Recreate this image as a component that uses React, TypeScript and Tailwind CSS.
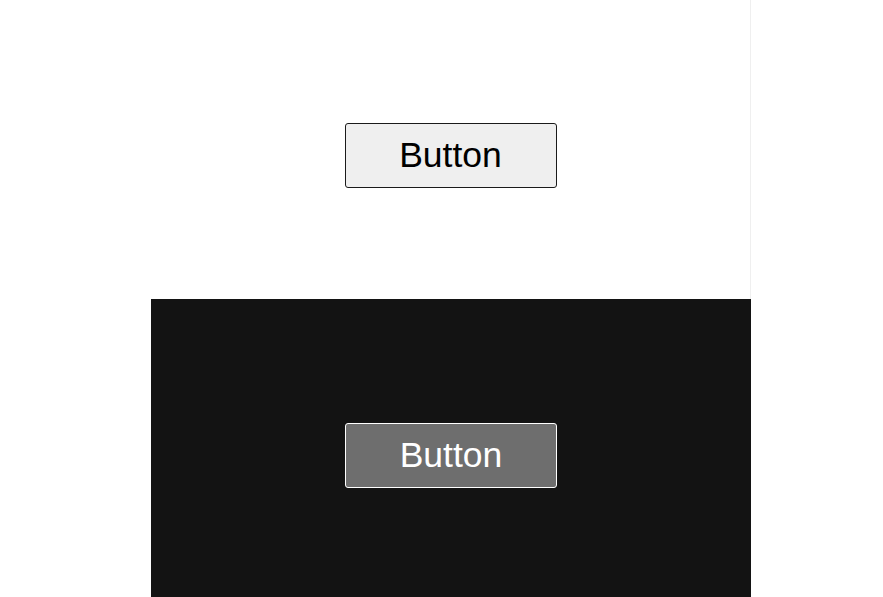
export default function App() {
  return (
    <div className="w-[883px] h-[597px] bg-white flex" style={{ fontFamily: '"Liberation Sans", Arial, sans-serif' }}>
      <div className="w-[151px] shrink-0" />
      <div className="w-[600px] flex flex-col">
        {/* light panel */}
        <div className="h-[299px] bg-white border-r border-[#efefef] flex justify-center">
          <button className="mt-[123px] w-[212px] h-[65px] bg-[#efefef] border border-[#1a1a1a] rounded-[3px] text-[35.5px] leading-none text-black flex items-center justify-center">
            Button
          </button>
        </div>
        {/* dark panel */}
        <div className="h-[298px] bg-[#131313] flex justify-center">
          <button className="mt-[124px] w-[212px] h-[65px] bg-[#6e6e6e] border border-white rounded-[3px] text-[35.5px] leading-none text-white flex items-center justify-center">
            Button
          </button>
        </div>
      </div>
    </div>
  );
}
